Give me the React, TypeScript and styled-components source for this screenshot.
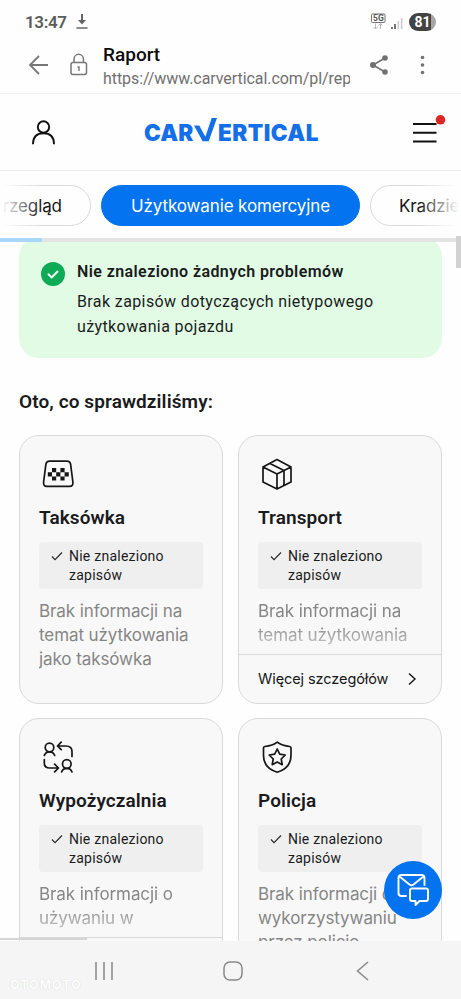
import React from "react";
import styled, { createGlobalStyle } from "styled-components";

const Global = createGlobalStyle`
  * { box-sizing: border-box; }
  body { margin: 0; background: #fff; }
`;

const Screen = styled.div`
  position: relative;
  display: flex;
  flex-direction: column;
  width: 461px;
  height: 999px;
  overflow: hidden;
  background: #fefefe;
  color: #1b1b1d;
  font-family: Roboto, "Noto Sans", sans-serif;
`;

const StatusBar = styled.div`
  flex: none;
  display: flex;
  align-items: center;
  height: 42px;
  padding: 1px 25px 0 25px;
  color: #5c5c5c;
`;

const Clock = styled.span`
  width: 42px;
  margin-right: 9px;
  font-size: 17px;
  font-weight: 600;
  letter-spacing: -0.35px;
  white-space: nowrap;
`;

const StatusGroup = styled.div`
  display: flex;
  align-items: center;
  margin-left: auto;
`;

const Battery = styled.span`
  width: 27px;
  height: 18px;
  margin-left: 6px;
  border-radius: 9px;
  background: linear-gradient(90deg, #434343 81%, #a6a6a6 81%);
  color: #fff;
  font-size: 14px;
  font-weight: 700;
  line-height: 18px;
  text-align: center;
`;

const BrowserBar = styled.div`
  flex: none;
  display: flex;
  align-items: center;
  height: 52px;
  padding-left: 28px;
  border-bottom: 1px solid #f0f0f0;

  > svg { flex: none; margin-top: -5px; }
`;

const PageInfo = styled.div`
  width: 247px;
  margin-left: 15px;
  overflow: hidden;
  white-space: nowrap;
`;

const PageTitle = styled.div`
  height: 24px;
  color: #0c0c0c;
  font-size: 19px;
  font-weight: 500;
  line-height: 22px;
`;

const PageUrl = styled.div`
  height: 23px;
  color: #707070;
  font-size: 16px;
  line-height: 22px;
  letter-spacing: -0.07px;
`;

const SiteHeader = styled.header`
  flex: none;
  display: flex;
  align-items: center;
  height: 77px;
  padding: 1px 15px 0 31px;
  border-bottom: 1px solid #ececec;
`;

const Logo = styled.div`
  display: flex;
  align-items: center;
  margin-left: 88px;
  color: #146fe9;
  font-family: Inter, sans-serif;
  font-size: 22.5px;
  font-weight: 900;
  line-height: 30px;
  white-space: nowrap;

  svg { flex: none; margin-right: 1px; }
`;

const LogoPart = styled.span<{ $width: number; $spacing: number }>`
  width: ${(p) => p.$width}px;
  letter-spacing: ${(p) => p.$spacing}px;
`;

const MenuIcon = styled.svg`
  margin-left: auto;
`;

const Tabs = styled.nav`
  position: relative;
  flex: none;
  display: flex;
  gap: 10px;
  height: 67px;
  padding-top: 14px;
  overflow: hidden;

  &::before, &::after {
    content: "";
    position: absolute;
    top: 0;
    width: 42px;
    height: 60px;
    z-index: 1;
  }
  &::before { left: 0; background: linear-gradient(90deg, #fefefe 5%, #fefefe00); }
  &::after { right: 0; background: linear-gradient(270deg, #fefefe 5%, #fefefe00); }
`;

const Tab = styled.button<{ $active?: boolean; $first?: boolean; $width: number }>`
  flex: none;
  width: ${(p) => p.$width}px;
  height: 41px;
  margin-left: ${(p) => (p.$first ? "-36px" : "0")};
  padding: 0 0 0 ${(p) => (p.$active ? "29px" : p.$first ? "27px" : "28px")};
  border: 1px solid ${(p) => (p.$active ? "#0373ef" : "#dadada")};
  border-radius: 21px;
  background: ${(p) => (p.$active ? "#0373ef" : "#fefefe")};
  color: ${(p) => (p.$active ? "#fff" : "#161616")};
  font-family: Inter, sans-serif;
  font-size: 17px;
  letter-spacing: -0.12px;
  text-align: left;
  white-space: nowrap;
`;

const Progress = styled.div`
  flex: none;
  height: 4px;
  background: linear-gradient(90deg, #a9d7fa 42px, #e4e4e4 42px);
`;

const Content = styled.main`
  flex: none;
  height: 699px;
  padding: 0 19px;
  overflow: hidden;
`;

const Notice = styled.section`
  display: flex;
  height: 121px;
  margin-top: -5px;
  padding: 25px 0 0 22px;
  border-radius: 20px;
  background: #e1fbe4;
`;

const NoticeText = styled.div`
  margin-left: 12px;
  font-size: 16px;
  line-height: 25px;
  letter-spacing: 0.39px;
  white-space: pre-line;
`;

const NoticeTitle = styled.div`
  margin: -3px 0 5px;
  font-weight: 600;
  letter-spacing: 0.41px;
`;

const Heading = styled.h2`
  margin: 30px 0 20px;
  font-size: 19px;
  font-weight: 600;
  line-height: 27px;
  letter-spacing: 0.1px;
`;

const Grid = styled.div`
  display: grid;
  grid-template-columns: 204px 204px;
  grid-auto-rows: 269px;
  gap: 14px 15px;
`;

const CardBox = styled.article<{ $tall?: boolean }>`
  display: flex;
  flex-direction: column;
  height: ${(p) => (p.$tall ? "320px" : "269px")};
  padding: 19px 0 0;
  overflow: hidden;
  border: 1px solid #d9d9d9;
  border-radius: 20px;
  background: #f8f8f8;

  > svg { flex: none; margin-left: 19px; }
`;

const CardTitle = styled.h3`
  flex: none;
  height: 27px;
  margin: 11px 19px 11px;
  font-size: 19px;
  font-weight: 600;
  line-height: 27px;
  letter-spacing: 0.08px;
  white-space: nowrap;
`;

const Result = styled.div`
  flex: none;
  display: flex;
  gap: 6px;
  height: 47px;
  margin: 0 19px 10px;
  padding: 5px 12px 4px;
  border-radius: 4px;
  background: #efefef;
  font-size: 14px;
  line-height: 19px;
  letter-spacing: 0.24px;
  white-space: pre-line;

  svg { flex: none; margin-top: 3px; }
`;

const Description = styled.p<{ $fade?: boolean }>`
  flex: none;
  height: ${(p) => (p.$fade ? "55px" : "80px")};
  margin: 0 0 0 19px;
  overflow: hidden;
  color: #868686;
  font-family: Inter, sans-serif;
  font-size: 17px;
  line-height: 24px;
  letter-spacing: -0.09px;
  white-space: pre-line;
  ${(p) => p.$fade && "mask-image: linear-gradient(#000 24px, transparent 66px);"}
`;

const More = styled.button`
  flex: none;
  display: flex;
  align-items: center;
  justify-content: space-between;
  height: 49px;
  padding: 0 23px 1px 19px;
  border: 0;
  border-top: 1px solid #d9d9d9;
  background: none;
  color: #161616;
  font-family: Inter, sans-serif;
  font-size: 14.5px;
  letter-spacing: -0.08px;
  white-space: nowrap;
`;

const ScrollThumb = styled.div`
  position: absolute;
  top: 236px;
  right: 0;
  width: 5px;
  height: 32px;
  background: #d2d2d2;
`;

const BottomThumb = styled.div`
  position: absolute;
  top: 938px;
  left: 0;
  width: 87px;
  height: 2px;
  background: #d5d5d5;
`;

const ChatButton = styled.button`
  position: absolute;
  top: 861px;
  left: 384px;
  display: flex;
  width: 58px;
  height: 58px;
  padding: 0;
  border: 0;
  border-radius: 50%;
  background: #0373ef;
`;

const SystemNav = styled.footer`
  position: relative;
  flex: none;
  display: flex;
  align-items: center;
  gap: 109px;
  height: 58px;
  padding: 1px 0 0 94px;
  background: #f5f5f5;
`;

const BackIcon = styled.svg`
  margin-left: 4px;
`;

const Watermark = styled.span`
  position: absolute;
  left: 10px;
  bottom: 6px;
  color: #fff;
  font-family: Inter, sans-serif;
  font-size: 12px;
  font-weight: 700;
  line-height: 16px;
  letter-spacing: 1.3px;
  text-shadow: 0 0 1px #c8c8c8;
`;

const stroke = {
  fill: "none",
  stroke: "#161616",
  strokeWidth: 1.7,
  strokeLinecap: "round" as const,
  strokeLinejoin: "round" as const,
};

const TaxiIcon = () => (
  <svg width="38" height="38" viewBox="0 0 38 38">
    <path {...stroke} d="M10.500 6.200h17.500c2 0 3.200 1 3.600 3l2.300 18c.3 2.500-.8 4.200-3.100 4.200H7.700c-2.300 0-3.400-1.700-3.100-4.200L6.900 9.200c.4-2 1.600-3 3.600-3Z" />
    <path fill="#161616" d="M13 13h4.200v4.200H13zM21.400 13h4.200v4.200h-4.200zM8.800 17.200H13v4.200H8.800zM17.200 17.200h4.200v4.200h-4.200zM25.600 17.200h4.200v4.200h-4.200zM13 21.400h4.200v4.200H13zM21.400 21.400h4.200v4.200h-4.200z" />
  </svg>
);

const BoxIcon = () => (
  <svg width="38" height="38" viewBox="0 0 38 38">
    <path {...stroke} d="m19 4.500 14 7.500v15l-14 7-14-7V12L19 4.500ZM5 12l14 7 14-7M19 19v15M26 15.500V30M12 8.400l14 7.100" />
  </svg>
);

const RentIcon = () => (
  <svg width="38" height="38" viewBox="0 0 38 38">
    <g {...stroke}>
      <circle cx="10.500" cy="9.500" r="4.300" />
      <path d="M5.300 17.500c.8-2.500 2.500-3.700 5.200-3.700s4.400 1.200 5.200 3.700M22.200 4.200 18.500 8l3.700 3.700M18.500 8h8.200c4 0 6.300 1.700 6.300 5.500v5M5.300 21.500V25c0 3.300 2 5 5.500 5H19M15.600 26.200l3.900 3.800-3.900 3.800" />
      <circle cx="27.800" cy="26" r="4.300" />
      <path d="M22.600 34c.8-2.500 2.500-3.700 5.200-3.700s4.400 1.200 5.200 3.700" />
    </g>
  </svg>
);

const PoliceIcon = () => (
  <svg width="38" height="38" viewBox="0 0 38 38">
    <path {...stroke} d="M19.300 4.200c3 2.300 7.400 3.800 12.400 4.300 1 .1 1.300.6 1.300 1.500v7.500c0 8-5 14-13.700 16.700C10.400 31.500 5.500 25.500 5.500 17.500V10c0-.9.300-1.400 1.300-1.500 5-.5 9.500-2 12.500-4.300Z" />
    <path {...stroke} d="m19.200 11 2.500 5.200 5.500.8-4 4 1 5.700-5-2.700-5 2.700 1-5.700-4-4 5.500-.8 2.500-5.200Z" />
  </svg>
);

type CardProps = {
  icon: React.ReactNode;
  title: string;
  text: string;
  more?: boolean;
  tall?: boolean;
};

const Card = ({ icon, title, text, more, tall }: CardProps) => (
  <CardBox $tall={tall}>
    {icon}
    <CardTitle>{title}</CardTitle>
    <Result>
      <svg width="12" height="12" viewBox="0 0 12 12">
        <path d="m1 6.500 3 3.200L11 2.500" fill="none" stroke="#252525" strokeWidth="1.1" />
      </svg>
      <span>{"Nie znaleziono\nzapisów"}</span>
    </Result>
    <Description $fade={more}>{text}</Description>
    {more && (
      <More>
        Więcej szczegółów
        <svg width="12" height="14" viewBox="0 0 12 14">
          <path d="m3 1.500 6 5.500-6 5.500" fill="none" stroke="#161616" strokeWidth="1.400" />
        </svg>
      </More>
    )}
  </CardBox>
);

export default function App() {
  return (
    <Screen>
      <Global />
      <StatusBar>
        <Clock>13:47</Clock>
        <svg width="12" height="15" viewBox="0 0 12 15">
          <path d="M6 0v8" stroke="#646464" strokeWidth="2" />
          <path d="M2 6h8l-4 4.500z" fill="#646464" />
          <path d="M.5 14h11" stroke="#646464" strokeWidth="1.500" />
        </svg>
        <StatusGroup>
          <svg width="33" height="18" viewBox="0 0 33 18">
            <rect x="1.500" y="1" width="13.500" height="8.500" rx="1" fill="none" stroke="#777" />
            <text x="3" y="8.300" fontFamily="Roboto, sans-serif" fontSize="8.500" fontWeight="700" fill="#555">5G</text>
            <path d="M5.500 10.500V16m-2-2 2 2 2-2M10.500 16v-5.500m-2 2 2-2 2 2" fill="none" stroke="#bbb" />
            <path d="M22 16v-2M25 16v-5" stroke="#555" strokeWidth="1.600" />
            <path d="M28.300 16V8M31.600 16V5" stroke="#ccc" strokeWidth="1.600" />
          </svg>
          <Battery>81</Battery>
        </StatusGroup>
      </StatusBar>

      <BrowserBar>
        <svg width="21" height="22" viewBox="0 0 21 22">
          <path d="M20 11H2M11 2l-9 9 9 9" fill="none" stroke="#777" strokeWidth="1.800" />
        </svg>
        <svg width="39" height="24" viewBox="0 0 39 24">
          <rect x="22" y="9.500" width="15.500" height="12" rx="2" fill="none" stroke="#777" strokeWidth="1.500" />
          <path d="M25 9V6a4.700 4.700 0 0 1 9.400 0v3" fill="none" stroke="#777" strokeWidth="1.500" />
          <path d="M28.500 14h1.500v4" fill="none" stroke="#777" strokeWidth="1.400" />
        </svg>
        <PageInfo>
          <PageTitle>Raport</PageTitle>
          <PageUrl>https://www.carvertical.com/pl/report</PageUrl>
        </PageInfo>
        <svg width="82" height="24" viewBox="0 0 82 24">
          <path d="m35 5-12 7 12 7" fill="none" stroke="#717171" strokeWidth="1.600" />
          <g fill="#717171">
            <circle cx="23" cy="12" r="3" />
            <circle cx="35" cy="5" r="2.800" />
            <circle cx="35" cy="19" r="2.800" />
            <circle cx="72.500" cy="4.500" r="1.800" />
            <circle cx="72.500" cy="12" r="1.800" />
            <circle cx="72.500" cy="19.500" r="1.800" />
          </g>
        </svg>
      </BrowserBar>

      <SiteHeader>
        <svg width="25" height="26" viewBox="0 0 25 26">
          <circle cx="12.500" cy="7" r="5.700" fill="none" stroke="#111" strokeWidth="1.900" />
          <path d="M2 24.200C2 17 6 13.300 12.500 13.300S23 17 23 24.200" fill="none" stroke="#111" strokeWidth="1.900" />
        </svg>
        <Logo>
          <LogoPart $width={50} $spacing={0.1}>CAR</LogoPart>
          <svg width="23" height="30" viewBox="0 0 23 30">
            <path d="M0 7.500h5.200l6.200 11.300L17.700 0H23l-8.300 23.300H8.600z" fill="#146fe9" />
          </svg>
          <LogoPart $width={105} $spacing={0.5}>ERTICAL</LogoPart>
        </Logo>
        <MenuIcon width="34" height="36" viewBox="0 0 34 36">
          <path d="M1 9h23.500M1 17.700h23.500M1 26.400h23.500" stroke="#111" strokeWidth="2" />
          <circle cx="28.500" cy="4.800" r="4.800" fill="#dc2623" />
        </MenuIcon>
      </SiteHeader>

      <Tabs>
        <Tab $first $width={127}>Przegląd</Tab>
        <Tab $active $width={259}>Użytkowanie komercyjne</Tab>
        <Tab $width={130}>Kradzieże</Tab>
      </Tabs>
      <Progress />

      <Content>
        <Notice>
          <svg width="24" height="24" viewBox="0 0 24 24">
            <circle cx="12" cy="12" r="12" fill="#0eaa55" />
            <path d="m7.500 12.300 3.200 3.200 5.800-6" fill="none" stroke="#effff3" strokeWidth="2" strokeLinecap="round" strokeLinejoin="round" />
          </svg>
          <NoticeText>
            <NoticeTitle>Nie znaleziono żadnych problemów</NoticeTitle>
            {"Brak zapisów dotyczących nietypowego\nużytkowania pojazdu"}
          </NoticeText>
        </Notice>
        <Heading>Oto, co sprawdziliśmy:</Heading>
        <Grid>
          <Card icon={<TaxiIcon />} title="Taksówka" text={"Brak informacji na\ntemat użytkowania\njako taksówka"} />
          <Card icon={<BoxIcon />} title="Transport" text={"Brak informacji na\ntemat użytkowania"} more />
          <Card icon={<RentIcon />} title="Wypożyczalnia" text={"Brak informacji o\nużywaniu w"} more />
          <Card icon={<PoliceIcon />} title="Policja" text={"Brak informacji o\nwykorzystywaniu\nprzez policję"} tall />
        </Grid>
      </Content>

      <SystemNav>
        <svg width="20" height="20" viewBox="0 0 20 20">
          <path d="M2 1v18M10 1v18M18 1v18" stroke="#888" strokeWidth="1.500" />
        </svg>
        <svg width="20" height="20" viewBox="0 0 20 20">
          <rect x="1" y="1" width="18" height="18" rx="6" fill="none" stroke="#888" strokeWidth="1.500" />
        </svg>
        <BackIcon width="14" height="20" viewBox="0 0 14 20">
          <path d="M12 1 1.500 10 12 19" fill="none" stroke="#888" strokeWidth="1.500" />
        </BackIcon>
        <Watermark>OTOMOTO</Watermark>
      </SystemNav>

      <ScrollThumb />
      <BottomThumb />
      <ChatButton aria-label="Kontakt">
        <svg width="58" height="58" viewBox="0 0 58 58" fill="none" stroke="#fff" strokeWidth="1.900" strokeLinejoin="round" strokeLinecap="round">
          <path d="M22 35h-4.500a3 3 0 0 1-3-3V17a3 3 0 0 1 3-3h20a3 3 0 0 1 3 3v7M15.500 15.500l10 8c1.400 1 2.600 1 4 0l10-8" />
          <path d="M28 27.500h14a2 2 0 0 1 2 2v8.500a2 2 0 0 1-2 2h-6.500L31.500 44v-4H28a2 2 0 0 1-2-2v-8.500a2 2 0 0 1 2-2Z" />
        </svg>
      </ChatButton>
    </Screen>
  );
}
